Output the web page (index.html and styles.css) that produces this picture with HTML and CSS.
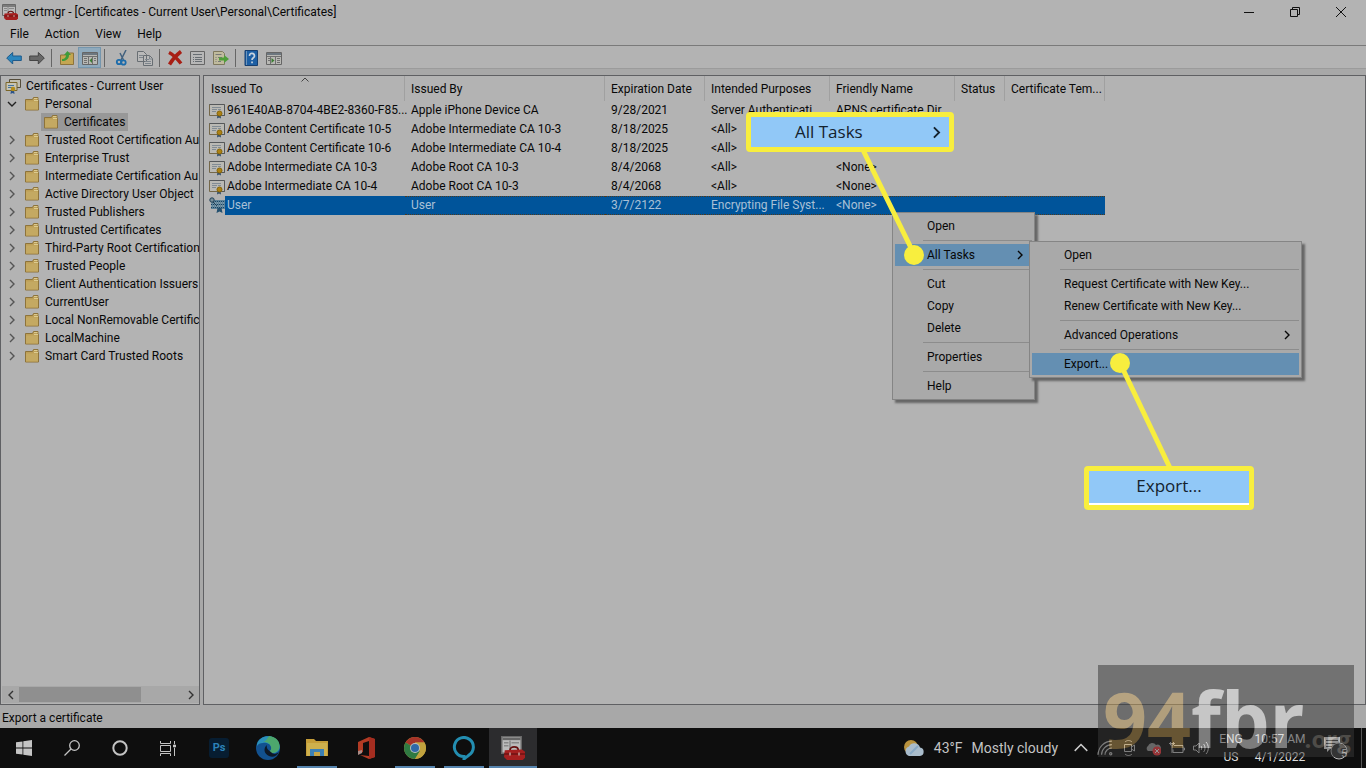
FILE: index.html
```html
<!DOCTYPE html>
<html lang="en">
<head>
<meta charset="utf-8">
<title>certmgr - [Certificates - Current User\Personal\Certificates]</title>
<link rel="stylesheet" href="styles.css">
</head>
<body>
<svg class="defs" aria-hidden="true">
  <symbol id="folder" viewBox="0 0 16 16">
    <path d="M1.500 3.500h7l1-2h4.500v3h.5v9.500H1.500z" fill="#bd9f57" stroke="#8d733b"/>
    <path d="M2 5.500h12v8H2z" fill="#c4a962"/><path d="M10 2.500h3.500M10 4.500h4" stroke="#dccb91"/>
  </symbol>
  <symbol id="cert" viewBox="0 0 16 16">
    <path d="M.5 1.500h15v11H.5z" fill="#bab9b4" stroke="#75684a"/>
    <path d="M15.500 2v10.500H9M.5 1.500h15" fill="none" stroke="#55585b"/>
    <path d="M3 4.500h9M3 6.500h5M9 6.500h3M3 8.500h4" stroke="#818b94"/>
    <path d="M8.500 11l-.5 4.500 2-1 2 1-.5-4.500z" fill="#35506c"/><circle cx="10.500" cy="10.500" r="2.500" fill="#ad8213" stroke="#86640b"/>
  </symbol>
  <symbol id="mmc" viewBox="0 0 16 16">
    <path d="M.5 .5h13v11H.5z" fill="#bbb" stroke="#686868"/><path d="M1 2h12" stroke="#666" stroke-width="1.500"/>
    <path d="M2 4.500h3M2 6.500h3M7 4.500h5M6 3v6" stroke="#888"/>
    <path d="M6 9.500c0-3 5.500-3 5.500 0" fill="none" stroke="#611" stroke-width="1.200"/>
    <path d="M2.500 9.500L14 9l2 1.500v4L14.500 16H4l-2-2z" fill="#a51f1f"/><path d="M2 12h14" stroke="#6d1515"/><path d="M6 11v2M12 11v2" stroke="#c9a09a"/>
  </symbol>
  <symbol id="chev" viewBox="0 0 10 10"><path d="M3 1l4 4-4 4" fill="none" stroke="currentColor" stroke-width="1.400"/></symbol>
</svg>

<div class="app">
  <header class="titlebar">
    <svg class="i16"><use href="#mmc"/></svg>
    <h1>certmgr - [Certificates - Current User\Personal\Certificates]</h1>
    <div class="winbtns">
      <button aria-label="Minimize"><svg viewBox="0 0 10 10"><path d="M0 5.500h10"/></svg></button>
      <button aria-label="Restore"><svg viewBox="0 0 10 10"><path d="M.5 2.500h7v7h-7zM2.500 2.500v-2h7v7h-2"/></svg></button>
      <button aria-label="Close"><svg viewBox="0 0 10 10"><path d="M0 0l10 10M10 0L0 10"/></svg></button>
    </div>
  </header>
  <nav class="menubar"><button>File</button><button>Action</button><button>View</button><button>Help</button></nav>
  <div class="toolbar">
    <button aria-label="Back"><svg viewBox="0 0 16 16"><path d="M.7 8l6-5.500V6h8.600v4.500H6.700V14z" fill="#2c86bd" stroke="#1f5a8b"/></svg></button>
    <button aria-label="Forward"><svg viewBox="0 0 16 16"><path d="M15.300 8l-6-5.500V6H.7v4.500h8.600V14z" fill="#686868" stroke="#444"/></svg></button>
    <i class="sep"></i>
    <button aria-label="Up"><svg viewBox="0 0 16 16"><path d="M1.500 5h6l1-2h6v11.500h-13z" fill="#c4a652" stroke="#8d733b"/><path d="M3 9c3 0 4-2 4-4H5l3.500-4L12 5h-2c0 4-3 6-7 6z" fill="#3d9b3a"/></svg></button>
    <button class="on" aria-label="Show console tree"><svg viewBox="0 0 16 16"><path d="M.5 2.500h15v12H.5z" fill="#b8b8b4" stroke="#666"/><path d="M1 4h14" stroke="#6d7780" stroke-width="2"/><path d="M1 6.500h14M6.500 6v8M10.500 6v8M2 8.500h3M2 10.500h3M2 12.500h3M12 8.500h2M12 10.500h2" stroke="#707070"/><path d="M10 8v5L7.500 10.500z" fill="#3b7d32"/></svg></button>
    <i class="sep wide"></i>
    <button aria-label="Cut"><svg viewBox="0 0 16 16"><path d="M12 0L7 10M6 3l3.500 7" stroke="#43627f" stroke-width="1.500"/><circle cx="5" cy="12" r="2.200" fill="none" stroke="#1c6cab" stroke-width="1.800"/><circle cx="9.500" cy="12.500" r="2.200" fill="none" stroke="#1c6cab" stroke-width="1.800"/></svg></button>
    <button aria-label="Copy"><svg viewBox="0 0 16 16"><path d="M.5 1.500h6l3 3v7h-9zM6.500 5.500h6l3 3v7h-9z" fill="#b9b9b9" stroke="#686e73"/><path d="M2 5.500h4M2 7.500h4M8 9.500h4M8 11.500h6M8 13.500h6M12.500 6v3H15" fill="none" stroke="#7d858c"/></svg></button>
    <i class="sep"></i>
    <button aria-label="Delete"><svg viewBox="0 0 16 16"><path d="M2 2.500c4 2 8 6 12 11M14 1.500c-4 3-8 7-11.500 13" fill="none" stroke="#a81e14" stroke-width="3.500"/></svg></button>
    <button aria-label="Properties"><svg viewBox="0 0 16 16"><path d="M.5 1.500h14v13H.5z" fill="#b7b7b7" stroke="#666"/><path d="M3 4.500h9M5 7.500h7M5 9.500h7M5 11.500h7M3 7.500h1M3 9.500h1M3 11.500h1" stroke="#676d72"/></svg></button>
    <button aria-label="Export list"><svg viewBox="0 0 16 16"><path d="M.5 1.500h9l2 2v11H.5z" fill="#c0bb9d" stroke="#7e785e"/><path d="M2.500 4.500h6M2.500 7.500h1M5 7.500h4M2.500 9.500h1M2.500 11.500h1M5 11.500h3" stroke="#777"/><path d="M6 7.500h5V5l5 4-5 4v-2.500H6z" fill="#4f9e39"/></svg></button>
    <i class="sep"></i>
    <button aria-label="Help"><svg viewBox="0 0 16 16"><path d="M2 .5h12.500v15H2z" fill="#1d5fa4" stroke="#163f70"/><path d="M3.500 1v14" stroke="#6d94ba"/><path d="M6.500 6c0-4 5-3 5 0 0 2-2.500 1.500-2.500 4" fill="none" stroke="#c7d2de" stroke-width="1.700"/><path d="M8.200 11.500h1.700v1.700H8.200z" fill="#c7d2de"/></svg></button>
    <button aria-label="Show action pane"><svg viewBox="0 0 16 16"><path d="M.5 2.500h15v12H.5z" fill="#b8b8b4" stroke="#666"/><path d="M1 4h14" stroke="#6d7780" stroke-width="2"/><path d="M1 6.500h14M4.500 6v8M9.500 6v8M11 8.500h3M11 10.500h3M11 12.500h3M2 8.500h2M2 10.500h2" stroke="#707070"/><path d="M5.500 8v5L8.500 10.500z" fill="#3b7d32"/></svg></button>
  </div>

  <main class="panes">
    <aside class="pane tree">
      <ul>
        <li class="root"><svg class="i16" viewBox="0 0 16 16"><path d="M4.500 1.500h11v8h-11z" fill="#c1beb0" stroke="#554d3b"/><path d="M1 4.500h11v8H1z" fill="#c6c3b4" stroke="#7b6628"/><path d="M3 7.500h6M3 9.500h4" stroke="#45749c"/><path d="M6 12l-.5 4 2-1 2 1-.5-4z" fill="#29528a"/><circle cx="8" cy="11" r="2.300" fill="#b48c1a"/></svg><span>Certificates - Current User</span></li>
        <li class="open"><svg class="tw"><use href="#chev"/></svg><svg class="i16"><use href="#folder"/></svg><span>Personal</span></li>
        <li class="child"><a href="#"><svg class="i16"><use href="#folder"/></svg><span>Certificates</span></a></li>
        <li><svg class="tw"><use href="#chev"/></svg><svg class="i16"><use href="#folder"/></svg><span>Trusted Root Certification Au</span></li>
        <li><svg class="tw"><use href="#chev"/></svg><svg class="i16"><use href="#folder"/></svg><span>Enterprise Trust</span></li>
        <li><svg class="tw"><use href="#chev"/></svg><svg class="i16"><use href="#folder"/></svg><span>Intermediate Certification Au</span></li>
        <li><svg class="tw"><use href="#chev"/></svg><svg class="i16"><use href="#folder"/></svg><span>Active Directory User Object</span></li>
        <li><svg class="tw"><use href="#chev"/></svg><svg class="i16"><use href="#folder"/></svg><span>Trusted Publishers</span></li>
        <li><svg class="tw"><use href="#chev"/></svg><svg class="i16"><use href="#folder"/></svg><span>Untrusted Certificates</span></li>
        <li><svg class="tw"><use href="#chev"/></svg><svg class="i16"><use href="#folder"/></svg><span>Third-Party Root Certification</span></li>
        <li><svg class="tw"><use href="#chev"/></svg><svg class="i16"><use href="#folder"/></svg><span>Trusted People</span></li>
        <li><svg class="tw"><use href="#chev"/></svg><svg class="i16"><use href="#folder"/></svg><span>Client Authentication Issuers</span></li>
        <li><svg class="tw"><use href="#chev"/></svg><svg class="i16"><use href="#folder"/></svg><span>CurrentUser</span></li>
        <li><svg class="tw"><use href="#chev"/></svg><svg class="i16"><use href="#folder"/></svg><span>Local NonRemovable Certific</span></li>
        <li><svg class="tw"><use href="#chev"/></svg><svg class="i16"><use href="#folder"/></svg><span>LocalMachine</span></li>
        <li><svg class="tw"><use href="#chev"/></svg><svg class="i16"><use href="#folder"/></svg><span>Smart Card Trusted Roots</span></li>
      </ul>
      <div class="hscroll">
        <button aria-label="Scroll left"><svg class="flip"><use href="#chev"/></svg></button>
        <div class="track"><div class="thumb"></div></div>
        <button aria-label="Scroll right"><svg><use href="#chev"/></svg></button>
      </div>
    </aside>
    <section class="pane list">
      <table>
        <colgroup><col class="c1"><col class="c2"><col class="c3"><col class="c4"><col class="c4"><col class="c6"><col class="c3"></colgroup>
        <thead><tr><th>Issued To<svg class="sort" viewBox="0 0 8 5"><path d="M.5 4.500L4 1l3.500 3.500" fill="none" stroke="#444"/></svg></th><th>Issued By</th><th>Expiration Date</th><th>Intended Purposes</th><th>Friendly Name</th><th>Status</th><th>Certificate Tem...</th></tr></thead>
        <tbody>
          <tr><td><svg class="i16"><use href="#cert"/></svg>961E40AB-8704-4BE2-8360-F85...</td><td>Apple iPhone Device CA</td><td>9/28/2021</td><td>Server Authenticati...</td><td>APNS certificate Dir...</td><td></td><td></td></tr>
          <tr><td><svg class="i16"><use href="#cert"/></svg>Adobe Content Certificate 10-5</td><td>Adobe Intermediate CA 10-3</td><td>8/18/2025</td><td>&lt;All&gt;</td><td>&lt;None&gt;</td><td></td><td></td></tr>
          <tr><td><svg class="i16"><use href="#cert"/></svg>Adobe Content Certificate 10-6</td><td>Adobe Intermediate CA 10-4</td><td>8/18/2025</td><td>&lt;All&gt;</td><td>&lt;None&gt;</td><td></td><td></td></tr>
          <tr><td><svg class="i16"><use href="#cert"/></svg>Adobe Intermediate CA 10-3</td><td>Adobe Root CA 10-3</td><td>8/4/2068</td><td>&lt;All&gt;</td><td>&lt;None&gt;</td><td></td><td></td></tr>
          <tr><td><svg class="i16"><use href="#cert"/></svg>Adobe Intermediate CA 10-4</td><td>Adobe Root CA 10-3</td><td>8/4/2068</td><td>&lt;All&gt;</td><td>&lt;None&gt;</td><td></td><td></td></tr>
          <tr class="sel"><td><svg class="i16" viewBox="0 0 16 16"><path d="M2 3h14v9H2z" fill="#5d8298"/><path d="M2 4.500h14M2 7.500h14M2 10.500h14" stroke="#164465" stroke-dasharray="1 1"/><path d="M2 6h14M2 9h14" stroke="#9ab0bb" stroke-dasharray="1 1"/><circle cx="3" cy="3" r="2.200" fill="#78909b" stroke="#203f55"/><path d="M4 5l4 4" stroke="#203f55"/><path d="M8.500 11l-1 5 3-1.500 3 1.500-1-5z" fill="#23506f"/></svg>User</td><td>User</td><td>3/7/2122</td><td>Encrypting File Syst...</td><td>&lt;None&gt;</td><td></td><td></td></tr>
        </tbody>
      </table>
    </section>
  </main>
  <footer class="status">Export a certificate</footer>

  <div class="taskbar">
    <div class="tasks">
      <button aria-label="Start"><svg viewBox="0 0 16 16" class="s16" fill="#c4c4c4"><path d="M0 2.300l6.500-.9v6.200H0zM7.300 1.300L16 0v7.600H7.300zM0 8.400h6.500v6.200L0 13.700zM7.300 8.400H16V16l-8.700-1.300z"/></svg></button>
      <button aria-label="Search"><svg viewBox="0 0 16 16" class="s16" fill="none" stroke="#c4c4c4" stroke-width="1.300"><circle cx="10.500" cy="5.500" r="4.800"/><path d="M7 9L.5 15.500"/></svg></button>
      <button aria-label="Cortana"><svg viewBox="0 0 16 16" class="s16" fill="none" stroke="#c4c4c4" stroke-width="2"><circle cx="8" cy="8" r="6.700"/></svg></button>
      <button class="last" aria-label="Task View"><svg viewBox="0 0 16 16" class="s16" fill="none" stroke="#c4c4c4"><path d="M.5 1v2.500h10V1M.5 5.500h10v6H.5zM.5 16v-2.500h10V16M14.500 1v3M14.500 8v8"/><path d="M13.500 5h2v2h-2z" fill="#c4c4c4"/></svg></button>
      <button aria-label="Photoshop"><span class="ps">Ps</span></button>
      <button aria-label="Edge"><svg viewBox="0 0 24 24" class="s24"><circle cx="12" cy="12" r="12" fill="#12518f"/><path d="M1 8C4-2 18-2 22 6c4 7 0 11-5 11-3 0-4-1-2-3 2-4-3-8-8-7-3 0-5 1-6 3z" fill="#2b91ba"/><path d="M13 0c9 1 12 8 10 13-2 4-7 5-9 3-1-1 2-2 1-5-1-4-4-5-8-5 2 0 4-3 6-6z" fill="#4da76d"/><path d="M15 16c2 3 6 2 8 0-2 4-6 6-10 4-5-2-6-8-2-11-1 3 1 5 4 7z" fill="#0e1927"/></svg></button>
      <button class="run" aria-label="File Explorer"><svg viewBox="0 0 22 20" class="s22"><path d="M0 1h8l2 2h12v15H0z" fill="#c59d38"/><path d="M1 5h20v13H1z" fill="#ceb04d"/><path d="M4 18v-7h14v7h-4v-4H8v4z" fill="#3c80b5"/><path d="M8 14h6v4H8z" fill="#c6a548"/></svg></button>
      <button aria-label="Office"><svg viewBox="0 0 20 22" class="s22"><path d="M13 0l6 2v18l-6 2-9-4 9 1V4L7 6v9l-5 2V5z" fill="#b23b24"/><path d="M13 0l6 2v18l-6 2z" fill="#a42d20"/><path d="M2 14l4-1v3l-4 2z" fill="#aa8b86"/></svg></button>
      <button class="run" aria-label="Chrome"><svg viewBox="0 0 22 22" class="s22"><circle cx="11" cy="11" r="11" fill="#ba9c3c"/><path d="M11 11L1.500 5.500A11 11 0 0 1 20.500 5.500H11z" fill="#a63328"/><path d="M1.500 5.500A11 11 0 0 0 11 22l5-8-5-3z" fill="#2f7a42"/><path d="M16 14l-5 8a11 11 0 0 0 9.500-16.500H11z" fill="#c1a23e"/><circle cx="11" cy="11" r="5" fill="#b8bec1"/><circle cx="11" cy="11" r="4" fill="#3069a8"/></svg></button>
      <button class="run" aria-label="Alexa"><svg viewBox="0 0 24 24" class="s24"><path d="M12 23v-2.500a9.500 9.500 0 1 1 5-1.500C16 20 14 21.500 12 23z" fill="none" stroke="#238eb1" stroke-width="3"/></svg></button>
      <button class="run active" aria-label="certmgr"><svg class="s24"><use href="#mmc"/></svg></button>
    </div>
    <div class="tray">
      <button class="weather"><svg viewBox="0 0 22 18" class="s22"><circle cx="8" cy="8" r="7" fill="#b8923e"/><path d="M6 17a5 5 0 0 1 0-9.500 6 6 0 0 1 11 1A4.300 4.300 0 0 1 17 17z" fill="#a9bccb"/><path d="M7 15l8-8" stroke="#87a8c4" stroke-width="2"/></svg><span>43°F</span><span>Mostly cloudy</span></button>
      <button class="ti" aria-label="Show hidden icons"><svg viewBox="0 0 14 14"><path d="M1.500 9.500L7 4l5.500 5.500" stroke-width="1.300"/></svg></button>
      <button class="ti" aria-label="Network"><svg viewBox="0 0 14 14"><path d="M1 13A12 12 0 0 1 13 1M4 13a9 9 0 0 1 9-9M7 13a6 6 0 0 1 6-6"/><circle cx="12" cy="12" r="1"/></svg></button>
      <button class="ti" aria-label="Meet Now"><svg viewBox="0 0 14 16"><path d="M2.500 4.500h7v7h-7zM9.500 7l3-2v6l-3-2M3 2c2-2 5-2 7 0M3 14c2 2 5 2 7 0"/></svg></button>
      <button class="ti" aria-label="OneDrive"><svg viewBox="0 0 16 14"><path d="M3 10a3 3 0 0 1 0-5 4.500 4.500 0 0 1 8-1 3 3 0 0 1 3 6z" fill="#999" stroke="none"/><circle cx="12" cy="10" r="4.500" fill="#ff3238" stroke="none"/><path d="M10 8l4 4M14 8l-4 4" stroke="#fff"/></svg></button>
      <button class="ti" aria-label="Battery"><svg viewBox="0 0 16 14"><path d="M5 4.500h9v7H4v-3M14 7h1.500v2H14M1.500 1v3h3V1M0 2.500h6M3 4v8"/></svg></button>
      <button class="ti" aria-label="Volume"><svg viewBox="0 0 16 14"><path d="M.5 5h2.500l3-3v10L3 9H.5zM8 5c1 1 1 3 0 4M10.500 3c2 2 2 6 0 8M13 1c3 3 3 9 0 12"/></svg></button>
      <button class="lang">ENG<br>US</button>
      <button class="clock">10:57 AM<br>4/1/2022</button>
      <button class="notif" aria-label="Notifications"><svg viewBox="0 0 24 24" class="s24"><path d="M0 1h16v12H6l-3 3v-3H0z" fill="#eee"/><path d="M2 4.500h12M2 7.500h12M2 10.500h6" stroke="#444"/><circle cx="15" cy="15" r="8" fill="#303030" stroke="#bbb"/></svg><span>5</span></button>
      <button class="desk" aria-label="Show desktop"></button>
    </div>
  </div>
</div>

<div class="menu ctx" role="menu">
  <button>Open</button><hr>
  <button class="hot">All Tasks<svg><use href="#chev"/></svg></button><hr>
  <button>Cut</button><button>Copy</button><button>Delete</button><hr>
  <button>Properties</button><hr>
  <button>Help</button>
</div>
<div class="menu sub" role="menu">
  <button>Open</button><hr>
  <button>Request Certificate with New Key...</button><button>Renew Certificate with New Key...</button><hr>
  <button>Advanced Operations<svg><use href="#chev"/></svg></button><hr>
  <button class="hot">Export...</button>
</div>

<svg class="leads" aria-hidden="true"><g stroke="#f8ee3e" stroke-width="5" fill="#f8ee3e"><path d="M863 150L914 254M1120 363L1170 468"/><g stroke="none"><circle cx="914" cy="255" r="10"/><circle cx="1120" cy="363" r="10"/></g></g></svg>
<div class="callout tasks-note"><span>All Tasks</span><svg><use href="#chev"/></svg></div>
<div class="callout export-note"><span>Export...</span></div>

<div class="mark"><span class="gold">94</span><span class="pale">fbr</span><span class="org">.org</span></div>
</body>
</html>
```

FILE: styles.css
```css
* { box-sizing: border-box; }
body { margin: 0; background: #a8a8a8; color: #080808; font: 12px/18px Roboto, "Noto Sans", sans-serif; overflow: hidden; }
button { font: inherit; color: inherit; background: none; border: 0; margin: 0; padding: 0; display: flex; align-items: center; justify-content: center; }
svg { display: block; flex: none; }
.defs { position: absolute; width: 0; height: 0; }
.i16, .s16 { width: 16px; height: 16px; }
.s22 { width: 22px; height: 22px; }
.s24 { width: 24px; height: 24px; }

.app { display: flex; flex-direction: column; height: 100vh; }
.titlebar { display: flex; align-items: center; height: 23px; background: #b3b3b3; padding-left: 2px; gap: 5px; }
.titlebar h1 { margin: 0; font-size: 12px; font-weight: 400; flex: 1; }
.winbtns { display: flex; height: 22px; padding-right: 2px; }
.winbtns button { width: 46px; }
.winbtns svg { width: 10px; height: 10px; fill: none; stroke: #111; }

.menubar { display: flex; height: 23px; background: #b3b3b3; border-bottom: 1px solid #7a7a7a; padding-left: 2px; }
.menubar button { padding: 0 8px; }
.toolbar { display: flex; align-items: center; height: 23px; background: #b3b3b3; border-bottom: 1px solid #9b9b9b; padding: 1px 0 0 2px; }
.toolbar button { width: 23px; height: 21px; }
.toolbar svg { width: 16px; height: 16px; }
.toolbar .on { background: #8faabd; border: 1px solid #7596ad; }
.sep { width: 1px; height: 18px; background: #666; margin: 0 3px; }
.wide { margin: 0 5px 0 3px; }

.panes { flex: 1; display: flex; gap: 3px; padding-top: 6px; min-height: 0; }
.pane { background: #b3b3b3; border: 1px solid #5f6063; }
.tree { width: 200px; display: flex; flex-direction: column; overflow: hidden; padding: 1px 0 1px 1px; }
.tree ul { flex: 1; margin: 0; padding: 0; list-style: none; overflow: hidden; }
.tree li { display: flex; align-items: center; height: 18px; padding-left: 5px; white-space: nowrap; }
.tree li .i16 { margin: 0 5px 0 7px; }
.tw { width: 10px; height: 10px; color: #555; }
.open .tw { transform: rotate(90deg); color: #222; }
.tree .root { padding-left: 3px; }
.tree .root .i16 { margin: 0 5px 0 0; }
.tree .child { padding-left: 39px; }
.child a { display: flex; align-items: center; height: 18px; background: #989898; color: inherit; text-decoration: none; padding-right: 3px; }
.tree .child .i16 { margin: 0 5px 0 2px; }
.hscroll { display: flex; height: 17px; background: #a8a8a8; }
.hscroll button { width: 17px; }
.hscroll svg { width: 10px; height: 10px; color: #333; }
.flip { transform: scaleX(-1); }
.track { flex: 1; padding: 1px 0; }
.thumb { width: 75%; height: 15px; background: #8f8f8f; }

.list { flex: 1; min-width: 0; overflow: hidden; }
table { border-collapse: separate; border-spacing: 0; table-layout: fixed; width: 901px; }
.c1 { width: 201px; } .c2 { width: 200px; } .c3 { width: 100px; } .c4 { width: 125px; } .c6 { width: 50px; }
th { position: relative; height: 25px; padding: 0 0 0 6px; font-weight: 400; text-align: left; border-right: 1px solid #a0a0a0; white-space: nowrap; }
.sort { position: absolute; top: 1px; left: 97px; width: 8px; height: 5px; }
td { height: 19px; padding: 0 0 0 6px; white-space: nowrap; line-height: 19px; }
td:first-child { padding-left: 5px; }
th:first-child { padding-left: 7px; }
td .i16 { float: left; margin: 2px 2px 0 0; }
.sel td { background: #00549a; color: #a9c0d6; border: 1px dotted #4c3a20; border-width: 1px 0; line-height: 17px; }
.sel td .i16 { margin-top: 0; }
.sel td:first-child { background: linear-gradient(to right, #b3b3b3 21px, #00549a 21px); border-color: transparent; }

.status { height: 23px; padding: 4px 2px 0; line-height: 18px; }

.taskbar { display: flex; height: 40px; background: #0e0e0e; color: #c4c4c4; }
.tasks, .tray { display: flex; }
.tray { margin-left: auto; }
.tasks button { width: 48px; height: 40px; margin-right: 1px; }
.tasks button:nth-child(-n+4) { margin-right: 0; }
.tasks .last:nth-child(4) { margin-right: 3px; }
.tasks .run { background: linear-gradient(#5684ae, #5684ae) center bottom / 40px 2px no-repeat; }
.tasks .active { background-color: #2c2c2e; background-size: 48px 2px; }
.ps { width: 20px; height: 20px; border-radius: 3px; background: #071d31; color: #2c82b8; font-weight: 700; font-size: 11px; line-height: 20px; }
.weather { font-size: 14px; gap: 9px; padding-right: 11px; }
.ti { width: 24px; }
.ti svg { width: 16px; height: 16px; fill: none; stroke: #ccc; }
.lang, .clock { line-height: 18px; text-align: center; color: #ddd; }
.lang { width: 36px; }
.clock { width: 62px; }
.notif { width: 50px; position: relative; }
.notif span { position: absolute; left: 25px; top: 18px; width: 16px; font-size: 11px; line-height: 16px; color: #eee; }
.desk { width: 5px; border-left: 1px solid #555; }

.menu { position: absolute; background: #a9a9a9; border: 1px solid #858585; padding: 2px; box-shadow: 3px 3px 2px #666; }
.ctx { left: 892px; top: 212px; width: 143px; }
.sub { left: 1029px; top: 241px; width: 273px; }
.menu button { width: 100%; height: 22px; padding: 0 7px 0 32px; justify-content: space-between; }
.menu svg { width: 10px; height: 10px; }
.menu .hot { background: #648fb2; }
.menu hr { margin: 3px 0 3px 28px; border: 0; height: 1px; background: #8c8c8c; }

.leads { position: absolute; left: 0; top: 0; width: 100%; height: 100%; }
.callout { position: absolute; display: flex; align-items: center; background: #91c8f7; border: 5px solid #f8ee3e; border-radius: 4px; color: #14222e; font-family: "Open Sans", "Noto Sans", sans-serif; font-size: 17px; }
.callout svg { width: 13px; height: 13px; }
.tasks-note { left: 746px; top: 112px; width: 208px; height: 40px; padding: 0 6px 0 44px; justify-content: space-between; }
.export-note { left: 1084px; top: 466px; width: 170px; height: 44px; padding-bottom: 4px; justify-content: center; box-shadow: inset 0 -2px #fff; }

.mark { position: absolute; left: 1098px; top: 665px; width: 256px; height: 92px; display: flex; align-items: baseline; padding-left: 5px; background: #383838; opacity: 0.52; font: 700 77px/108px "Open Sans", sans-serif; }
.gold { color: #b99655; }
.pale { color: #e2e2e2; }
.org { color: #8a857e; font-size: 24px; }
```
